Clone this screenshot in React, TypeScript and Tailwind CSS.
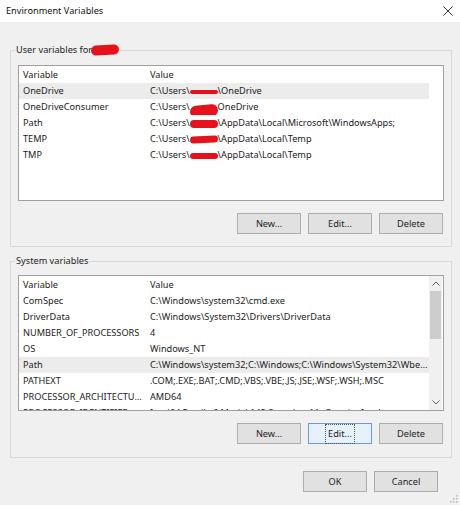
import type { ReactNode } from "react"

type Row = { name: string; value: ReactNode; selected?: boolean }

function Redact({ w, h, className = "" }: { w: number; h: number; className?: string }) {
  return (
    <span
      className={`inline-block align-middle rounded-full bg-[#e5121c] ${className}`}
      style={{ width: w, height: h }}
    />
  )
}

function userPath(h: number, rest: string, extra = "") {
  return (
    <>
      C:\Users\
      <Redact w={28} h={h} className={extra} />
      {rest}
    </>
  )
}

const userRows: Row[] = [
  { name: "OneDrive", value: userPath(4, "\\OneDrive"), selected: true },
  { name: "OneDriveConsumer", value: userPath(12, "OneDrive", "translate-y-[3px] -rotate-6") },
  { name: "Path", value: userPath(8, "\\AppData\\Local\\Microsoft\\WindowsApps;") },
  { name: "TEMP", value: userPath(7, "\\AppData\\Local\\Temp", "-rotate-3") },
  { name: "TMP", value: userPath(6, "\\AppData\\Local\\Temp") },
]

const systemRows: Row[] = [
  { name: "ComSpec", value: "C:\\Windows\\system32\\cmd.exe" },
  { name: "DriverData", value: "C:\\Windows\\System32\\Drivers\\DriverData" },
  { name: "NUMBER_OF_PROCESSORS", value: "4" },
  { name: "OS", value: "Windows_NT" },
  {
    name: "Path",
    value: "C:\\Windows\\system32;C:\\Windows;C:\\Windows\\System32\\Wbem;C:\\Windows\\System32\\WindowsPowerShell\\v1.0\\",
    selected: true,
  },
  { name: "PATHEXT", value: ".COM;.EXE;.BAT;.CMD;.VBS;.VBE;.JS;.JSE;.WSF;.WSH;.MSC" },
  { name: "PROCESSOR_ARCHITECTURE", value: "AMD64" },
  { name: "PROCESSOR_IDENTIFIER", value: "Intel64 Family 6 Model 142 Stepping 11, GenuineIntel" },
]

function ListRows({ rows }: { rows: Row[] }) {
  return (
    <div className="w-[410px] pt-[1px] leading-[16px]">
      <div className="flex h-[16px]">
        <div className="w-[127px] pl-[4px]">Variable</div>
        <div className="flex-1 pl-[4px]">Value</div>
      </div>
      {rows.map((row) => (
        <div
          key={row.name}
          className={`flex h-[16px] whitespace-nowrap ${row.selected ? "bg-[#ececec]" : ""}`}
        >
          <div className="w-[127px] truncate pl-[4px] pr-[2px]">{row.name}</div>
          <div className="min-w-0 flex-1 truncate pl-[4px]">{row.value}</div>
        </div>
      ))}
    </div>
  )
}

function Button({ children, focused }: { children: ReactNode; focused?: boolean }) {
  return (
    <button
      className={`flex h-[21px] w-[64px] items-center justify-center border leading-[14px] ${
        focused ? "border-[#6f9bd1] bg-[#e5f1fb]" : "border-[#adadad] bg-[#e1e1e1]"
      }`}
    >
      <span className={focused ? "outline outline-1 outline-dotted outline-[#555] outline-offset-[2px]" : ""}>
        {children}
      </span>
    </button>
  )
}

function Chevron({ up }: { up?: boolean }) {
  return (
    <svg width="8" height="5" viewBox="0 0 8 5" fill="none" stroke="#606060" strokeWidth="1">
      {up ? <path d="M0.5 4.5L4 1L7.5 4.5" /> : <path d="M0.5 0.5L4 4L7.5 0.5" />}
    </svg>
  )
}

export default function App() {
  return (
    <div
      className="flex h-[505px] w-[460px] flex-col overflow-hidden bg-[#f0f0f0] text-[9.2px] leading-[14px] text-[#222]"
      style={{ fontFamily: '"Noto Sans", "Open Sans", sans-serif' }}
    >
      {/* title bar */}
      <div className="flex h-[22px] shrink-0 items-center justify-between bg-white pl-[6px] pr-[7px]">
        <span className="text-[#111]">Environment Variables</span>
        <svg width="10" height="10" viewBox="0 0 10 10" stroke="#333" strokeWidth="1">
          <path d="M0.5 0.5L9.5 9.5M9.5 0.5L0.5 9.5" />
        </svg>
      </div>

      <div className="flex flex-col pl-[10px] pr-[8px]">
        <fieldset className="mt-[20px] border border-[#d9d9d9]">
          <legend className="ml-[4px] flex h-[16px] items-center px-[1px]">
            User variables for
            <Redact w={28} h={10} className="-ml-[1px] -rotate-3" />
          </legend>
          <div className="px-[7px] pb-[12px] pt-[7px]">
            <div className="h-[136px] overflow-hidden border border-[#a0a0a0] bg-white">
              <ListRows rows={userRows} />
            </div>
            <div className="mt-[12px] flex justify-end gap-[7px] pr-[1px]">
              <Button>New...</Button>
              <Button>Edit...</Button>
              <Button>Delete</Button>
            </div>
          </div>
        </fieldset>

        <fieldset className="mt-[6px] border border-[#d9d9d9]">
          <legend className="ml-[4px] flex h-[16px] items-center px-[1px]">System variables</legend>
          <div className="px-[7px] pb-[13px] pt-[6px]">
            <div className="flex h-[136px] overflow-hidden border border-[#a0a0a0] bg-white">
              <ListRows rows={systemRows} />
              <div className="flex w-[13px] flex-col bg-[#f0f0f0]">
                <div className="flex h-[15px] items-center justify-center">
                  <Chevron up />
                </div>
                <div className="flex-1 px-[1px]">
                  <div className="h-[48px] bg-[#cdcdcd]" />
                </div>
                <div className="flex h-[15px] items-center justify-center">
                  <Chevron />
                </div>
              </div>
            </div>
            <div className="mt-[12px] flex justify-end gap-[7px] pr-[1px]">
              <Button>New...</Button>
              <Button focused>Edit...</Button>
              <Button>Delete</Button>
            </div>
          </div>
        </fieldset>
      </div>

      <div className="mt-[13px] flex justify-end gap-[7px] pr-[22px]">
        <Button>OK</Button>
        <Button>Cancel</Button>
      </div>

      {/* size grip */}
      <div className="flex flex-1 items-end justify-end pb-[2px] pr-[2px]">
        <svg width="8" height="8" viewBox="0 0 8 8" fill="#b8b8b8">
          <rect x="6" y="0" width="1.5" height="1.5" />
          <rect x="3" y="3" width="1.5" height="1.5" />
          <rect x="6" y="3" width="1.5" height="1.5" />
          <rect x="0" y="6" width="1.5" height="1.5" />
          <rect x="3" y="6" width="1.5" height="1.5" />
          <rect x="6" y="6" width="1.5" height="1.5" />
        </svg>
      </div>
    </div>
  )
}
